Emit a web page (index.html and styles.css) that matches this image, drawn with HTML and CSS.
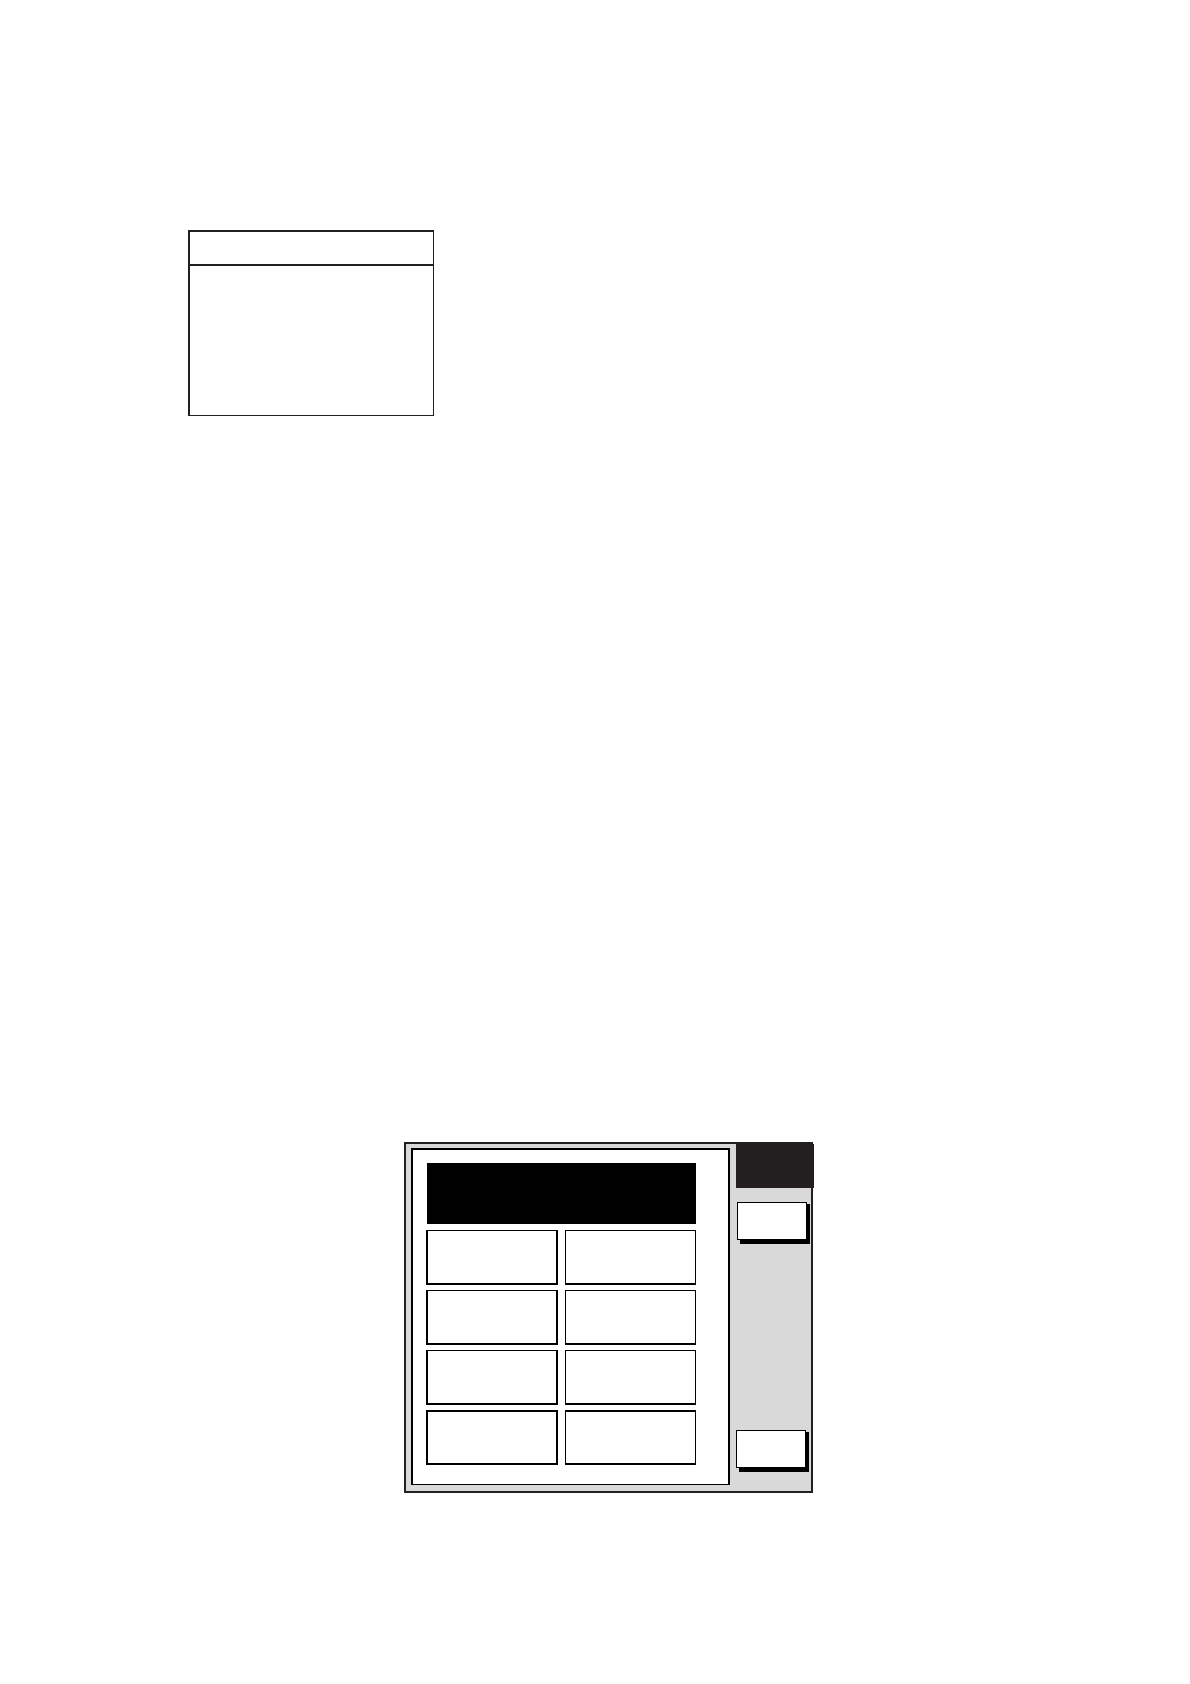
FILE: index.html
```html
<!DOCTYPE html>
<html lang="en">
<head>
  <meta charset="utf-8">
  <meta name="viewport" content="width=device-width, initial-scale=1">
  <title>Display</title>
  <link rel="stylesheet" href="styles.css">
</head>
<body>
  <main class="page">
    <section class="note">
      <header class="note-head"></header>
      <div class="note-body"></div>
    </section>

    <section class="panel">
      <div class="screen">
        <div class="banner"></div>
        <div class="keys">
          <button class="key" type="button" aria-label="Key 1"></button>
          <button class="key key-thin" type="button" aria-label="Key 2"></button>
          <button class="key" type="button" aria-label="Key 3"></button>
          <button class="key key-thin" type="button" aria-label="Key 4"></button>
          <button class="key" type="button" aria-label="Key 5"></button>
          <button class="key key-thin" type="button" aria-label="Key 6"></button>
          <button class="key key-last" type="button" aria-label="Key 7"></button>
          <button class="key key-thin key-last" type="button" aria-label="Key 8"></button>
        </div>
      </div>
      <aside class="side">
        <div class="status"></div>
        <button class="soft soft-top" type="button" aria-label="Upper soft key"></button>
        <button class="soft soft-bottom" type="button" aria-label="Lower soft key"></button>
      </aside>
    </section>
  </main>
</body>
</html>
```
FILE: styles.css
```css
* {
  box-sizing: border-box;
}

body {
  margin: 0;
  background: #fff;
  font-family: "Liberation Sans", Arial, sans-serif;
}

button {
  padding: 0;
  border-radius: 0;
  background: #fff;
}

.page {
  display: flex;
  flex-direction: column;
  gap: 726px;
  padding: 230px 188px 191px;
}

/* Framed note with a title strip */
.note {
  width: 100%;
  max-width: 246px;
  border: solid #231f20;
  border-width: 2px 1px 1px 2px;
}

.note-head {
  height: 34px;
  border-bottom: 2px solid #231f20;
}

.note-body {
  height: 149px;
}

/* Control panel */
.panel {
  display: flex;
  gap: 6px;
  width: 100%;
  max-width: 409px;
  margin-left: 216px;
  border: 2px solid #231f20;
  background: #d9d9d9;
}

.screen {
  flex: 1;
  margin: 4px 0 6px 5px;
  padding: 13px 32px 19px 13px;
  border: 2px solid #000;
  border-bottom-width: 1px;
  background: #fff;
}

.banner {
  height: 61px;
  margin: 0 0 6px 1px;
  background: #000;
}

.keys {
  display: grid;
  grid-template-columns: 132fr 131fr;
  gap: 5px 7px;
}

.key {
  height: 55px;
  border: 2px solid #000;
  border-top-width: 1px;
}

.key-thin {
  border-left-width: 1px;
  border-right-width: 1px;
}

.key-last {
  border-top-width: 2px;
}

/* Side column with the two soft keys */
.side {
  display: flex;
  flex-direction: column;
  width: 75px;
  padding-bottom: 23px;
}

.status {
  height: 44px;
  margin-right: -3px;
  background: #231f20;
}

.soft {
  width: 70px;
  height: 38px;
  border: 1px solid #000;
  box-shadow: 3px 2px 0 #000, 3px 4px 0 #000;
}

.soft-top {
  margin: 14px 0 0 1px;
}

.soft-bottom {
  margin-top: auto;
}
```
